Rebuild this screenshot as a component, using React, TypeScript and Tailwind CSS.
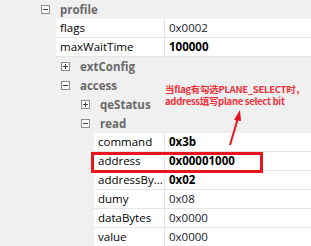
import React from 'react';

type Row =
  | { kind: 'group'; label: string; level: number; open: boolean }
  | { kind: 'prop'; name: string; value: string; indent: number; bold?: boolean };

const rows: Row[] = [
  { kind: 'group', label: 'profile', level: 0, open: true },
  { kind: 'prop', name: 'flags', value: '0x0002', indent: 56 },
  { kind: 'prop', name: 'maxWaitTime', value: '100000', indent: 56, bold: true },
  { kind: 'group', label: 'extConfig', level: 1, open: false },
  { kind: 'group', label: 'access', level: 1, open: true },
  { kind: 'group', label: 'qeStatus', level: 2, open: false },
  { kind: 'group', label: 'read', level: 2, open: true },
  { kind: 'prop', name: 'command', value: '0x3b', indent: 94, bold: true },
  { kind: 'prop', name: 'address', value: '0x00001000', indent: 94, bold: true },
  { kind: 'prop', name: 'addressBy...', value: '0x02', indent: 94, bold: true },
  { kind: 'prop', name: 'dumy', value: '0x08', indent: 94 },
  { kind: 'prop', name: 'dataBytes', value: '0x0000', indent: 94 },
  { kind: 'prop', name: 'value', value: '0x0000', indent: 94 },
];

const Expander: React.FC<{ open: boolean }> = ({ open }) => (
  <svg width="9" height="9" viewBox="0 0 9 9" className="shrink-0">
    <rect x="0.5" y="0.5" width="8" height="8" fill="#fcfcfc" stroke="#8f8f8f" />
    <line x1="2" y1="4.5" x2="7" y2="4.5" stroke="#404040" />
    {!open && <line x1="4.5" y1="2" x2="4.5" y2="7" stroke="#404040" />}
  </svg>
);

const App: React.FC = () => {
  return (
    <div
      className="relative w-[311px] h-[246px] overflow-hidden bg-[#f0f0f0] text-[11.5px] text-black"
      style={{ fontFamily: '"Open Sans", "Noto Sans", sans-serif' }}
    >
      <div className="flex flex-col">
        {rows.map((r, i) =>
          r.kind === 'group' ? (
            <div
              key={i}
              className="flex h-[19px] items-center"
              style={{ paddingLeft: 41 + r.level * 20 }}
            >
              <Expander open={r.open} />
              <span className="ml-[10px] font-bold text-[#6a6a6a] leading-none">{r.label}</span>
            </div>
          ) : (
            <div key={i} className="flex h-[19px]">
              <div className="shrink-0" style={{ width: r.indent }} />
              <div className="flex flex-1 border-b border-[#e6e6e6] bg-white">
                <div
                  className="flex h-full items-center pl-[4px] border-r border-[#e6e6e6]"
                  style={{ width: 165 - r.indent }}
                >
                  <span className="leading-none whitespace-nowrap">{r.name}</span>
                </div>
                <div className="flex h-full flex-1 items-center pl-[4px]">
                  <span className={`leading-none ${r.bold ? 'font-bold text-black' : 'text-[#1a1a2e]'}`}>
                    {r.value}
                  </span>
                </div>
              </div>
            </div>
          )
        )}
      </div>

      {/* annotation */}
      <div
        className="absolute left-[165px] top-[83px] text-[9.5px] font-bold leading-[12px] tracking-[-0.3px] text-[#f0323c] whitespace-nowrap"
        style={{ fontFamily: '"Noto Sans CJK SC", "Noto Sans", sans-serif' }}
      >
        <div>当flag有勾选PLANE_SELECT时，</div>
        <div>address填写plane select bit</div>
      </div>

      <svg className="absolute left-0 top-0" width="311" height="246">
        <line x1="230" y1="145" x2="238" y2="118" stroke="#e8141e" strokeWidth="2" />
        <polygon points="240,110 234,120 241,121" fill="#e8141e" />
      </svg>

      <div className="absolute left-[91px] top-[152px] w-[172px] h-[21px] border-[3px] border-[#e8141e]" />
    </div>
  );
};

export default App;
